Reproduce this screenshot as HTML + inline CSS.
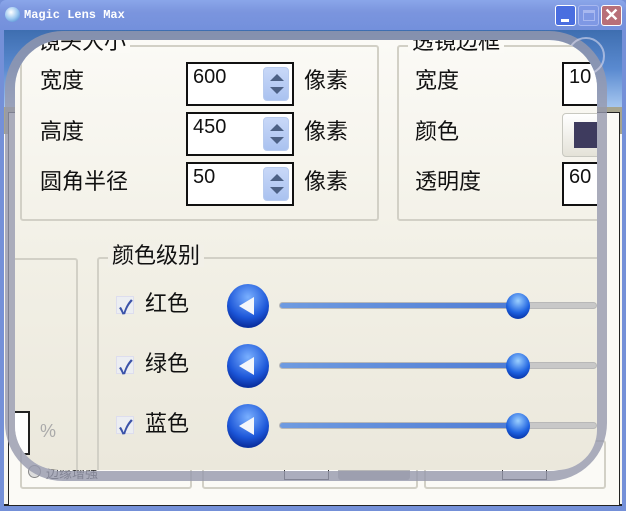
<!DOCTYPE html>
<html><head><meta charset="utf-8"><style>
*{margin:0;padding:0;box-sizing:border-box}
body{width:626px;height:511px;overflow:hidden;position:relative;background:#7490d8;font-family:"Liberation Sans","Noto Sans CJK SC",sans-serif}
.a{position:absolute}
.t{position:absolute;font-size:22px;color:#111;line-height:1;white-space:nowrap}
.inp{position:absolute;background:#fff;border:2px solid #111}
.spin{position:absolute;width:26px;height:34px;border-radius:4px;background:linear-gradient(#c8d8f8,#aac2f0);border:1px solid #b8cbee}
.spin:before,.spin:after{content:"";position:absolute;left:6px;border-left:7px solid transparent;border-right:7px solid transparent}
.spin:before{top:6px;border-bottom:7px solid #4d6185}
.spin:after{bottom:6px;border-top:7px solid #4d6185}
.grp{position:absolute;border:2px solid #d2d0c6;border-radius:3px}
.cb{position:absolute;width:18px;height:18px;background:#eceef2;border:1px solid #dde}
.cb:after{content:"✓";position:absolute;left:2px;top:-4px;font-size:19px;color:#3a52a8;font-weight:bold}
.rb{position:absolute;width:42px;height:44px;border-radius:50%;background:radial-gradient(circle at 50% 30%,#7ab0ff,#1c56d8 55%,#0a2e9e 80%,#4ac0ff)}
.rb:after{content:"";position:absolute;left:12px;top:13px;border-right:15px solid #f4f6fa;border-top:9px solid transparent;border-bottom:9px solid transparent}
.trk{position:absolute;left:279px;width:318px;height:7px;border-radius:4px;background:linear-gradient(90deg,#6f9be0 0,#4f7cd4 75%,#c8c8c8 75%);border:1px solid #b8b8b8}
.th{position:absolute;left:506px;width:24px;height:26px;border-radius:50%;background:radial-gradient(circle at 50% 30%,#9cd0ff,#1e62e0 55%,#0a3ab0 80%,#40b8ff)}
</style></head><body>
<div class="a" style="left:0;top:0;width:626px;height:30px;background:linear-gradient(#8aa6ea,#7b95de 40%,#7390dc);border-radius:6px 6px 0 0"></div>
<div class="a" style="left:5px;top:7px;width:15px;height:15px;border-radius:50%;background:radial-gradient(circle at 40% 35%,#fff,#9cc8f0 50%,#3a78c8)"></div>
<div class="a" style="left:24px;top:8px;color:#fff;font:bold 12px 'Liberation Mono',monospace">Magic Lens Max</div>
<div class="a" style="left:555px;top:5px;width:21px;height:21px;border:1px solid #fff;border-radius:3px;background:#4a6ee0"><div class="a" style="left:5px;top:13px;width:8px;height:3px;background:#fff"></div></div>
<div class="a" style="left:578px;top:5px;width:21px;height:21px;border:1px solid #a8b8f0;border-radius:3px;background:#7f98e4"><div class="a" style="left:4px;top:4px;width:12px;height:11px;border:1px solid #a8b8f0;border-top-width:3px"></div></div>
<div class="a" style="left:601px;top:5px;width:21px;height:21px;border:1px solid #fff;border-radius:3px;background:#b86f78;color:#fff;font:bold 18px 'Liberation Sans';text-align:center;line-height:19px">✕</div>
<div class="a" style="left:4px;top:30px;width:618px;height:476px;background:#f7f6f1;border-bottom:2px solid #222"></div>
<div class="a" style="left:4px;top:30px;width:618px;height:78px;background:linear-gradient(#3e6eb0,#5a8ad0 50%,#a8c8f0)"></div>
<div class="a" style="left:4px;top:107px;width:618px;height:27px;background:#a6a48e"></div>
<div class="a" style="left:8px;top:112px;width:612px;height:394px;background:#fbfaf6;border:1px solid #222"></div>
<div class="grp" style="left:20px;top:440px;width:172px;height:49px"></div>
<div class="grp" style="left:202px;top:440px;width:216px;height:49px"></div>
<div class="grp" style="left:424px;top:440px;width:182px;height:49px"></div>
<div class="a" style="left:28px;top:465px;width:13px;height:13px;border-radius:50%;border:1px solid #888;background:#ddd"></div>
<div class="a" style="left:46px;top:463px;font-size:13px;color:#333">边缘增强</div>
<div class="a" style="left:284px;top:458px;width:45px;height:22px;border:1px solid #333;background:#fff"></div>
<div class="a" style="left:338px;top:458px;width:72px;height:22px;border-radius:3px;background:#b8b8b8"></div>
<div class="a" style="left:502px;top:458px;width:45px;height:22px;border:1px solid #333;background:#fff"></div>
<div class="a" style="left:5px;top:31px;width:602px;height:450px;border-radius:58px;border:10px solid rgba(150,152,172,.8);border-top-width:9px"></div>
<div class="a" style="left:567px;top:37px;width:38px;height:38px;border-radius:50%;border:2px solid rgba(220,220,240,.6)"></div>
<div class="a" style="left:15px;top:40px;width:582px;height:430px;border-radius:48px 48px 40px 44px;overflow:hidden;background:linear-gradient(#fbfaf6,#f2f0e6 50%,#ebe8dc)">
 <div style="position:absolute;left:-15px;top:-40px;width:626px;height:511px">
  <div class="grp" style="left:20px;top:45px;width:359px;height:176px"></div>
  <div class="t" style="left:34px;top:31px;background:#fbfaf6;padding:0 4px">镜头大小</div>
  <div class="t" style="left:40px;top:70px">宽度</div>
  <div class="t" style="left:40px;top:121px">高度</div>
  <div class="t" style="left:40px;top:171px">圆角半径</div>
  <div class="inp" style="left:186px;top:62px;width:108px;height:44px"></div><div class="t" style="left:193px;top:67px;font-size:20px">600</div><div class="spin" style="left:263px;top:67px"></div>
  <div class="inp" style="left:186px;top:112px;width:108px;height:44px"></div><div class="t" style="left:193px;top:117px;font-size:20px">450</div><div class="spin" style="left:263px;top:117px"></div>
  <div class="inp" style="left:186px;top:162px;width:108px;height:44px"></div><div class="t" style="left:193px;top:167px;font-size:20px">50</div><div class="spin" style="left:263px;top:167px"></div>
  <div class="t" style="left:304px;top:70px">像素</div>
  <div class="t" style="left:304px;top:121px">像素</div>
  <div class="t" style="left:304px;top:171px">像素</div>
  <div class="grp" style="left:397px;top:45px;width:230px;height:176px"></div>
  <div class="t" style="left:408px;top:31px;background:#fbfaf6;padding:0 4px">透镜边框</div>
  <div class="t" style="left:415px;top:70px">宽度</div>
  <div class="t" style="left:415px;top:121px">颜色</div>
  <div class="t" style="left:415px;top:171px">透明度</div>
  <div class="inp" style="left:562px;top:62px;width:60px;height:44px"></div><div class="t" style="left:569px;top:67px;font-size:20px">10</div>
  <div class="a" style="left:562px;top:113px;width:60px;height:44px;border-radius:4px;border:1px solid #c8c8c0;background:linear-gradient(#fff,#e4e2d8)"><div class="a" style="left:11px;top:8px;width:40px;height:26px;background:#3e3b5e"></div></div>
  <div class="inp" style="left:562px;top:162px;width:60px;height:44px"></div><div class="t" style="left:569px;top:167px;font-size:20px">60</div>
  <div class="grp" style="left:0;top:258px;width:78px;height:260px"></div>
  <div class="inp" style="left:10px;top:411px;width:20px;height:44px;border-color:#222"></div>
  <div class="t" style="left:40px;top:422px;font-size:18px;color:#aaa">%</div>
  <div class="grp" style="left:97px;top:257px;width:508px;height:260px"></div>
  <div class="t" style="left:108px;top:245px;background:#f2f0e8;padding:0 4px">颜色级别</div>
  <div class="cb" style="left:116px;top:296px"></div><div class="t" style="left:145px;top:293px">红色</div>
  <div class="cb" style="left:116px;top:356px"></div><div class="t" style="left:145px;top:353px">绿色</div>
  <div class="cb" style="left:116px;top:416px"></div><div class="t" style="left:145px;top:413px">蓝色</div>
  <div class="rb" style="left:227px;top:284px"></div><div class="trk" style="top:302px"></div><div class="th" style="top:293px"></div>
  <div class="rb" style="left:227px;top:344px"></div><div class="trk" style="top:362px"></div><div class="th" style="top:353px"></div>
  <div class="rb" style="left:227px;top:404px"></div><div class="trk" style="top:422px"></div><div class="th" style="top:413px"></div>
 </div>
</div>
</body></html>
